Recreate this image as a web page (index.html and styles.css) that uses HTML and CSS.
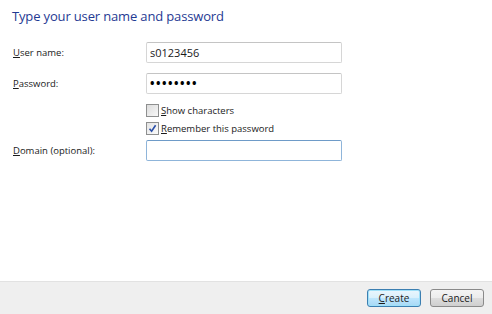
FILE: index.html
```html
<!DOCTYPE html>
<html lang="en">
<head>
    <meta charset="UTF-8">
    <meta name="viewport" content="width=device-width, initial-scale=1.0">
    <title>Type your user name and password</title>
    <link rel="stylesheet" href="styles.css">
</head>
<body>
    <div class="dialog">
        <div class="content">
            <h1>Type your user name and password</h1>

            <div class="form">
                <div class="row">
                    <label class="label" for="user"><u>U</u>ser name:</label>
                    <input class="field" id="user" type="text" value="s0123456">
                </div>
                <div class="row">
                    <label class="label" for="pass"><u>P</u>assword:</label>
                    <input class="field secret" id="pass" type="password" value="12345678">
                </div>
                <div class="check-row first">
                    <span class="checkbox"></span>
                    <span><u>S</u>how characters</span>
                </div>
                <div class="check-row">
                    <span class="checkbox checked">
                        <svg width="9" height="9" viewBox="0 0 9 9"><path d="M1.5 4.8 L3.6 7.2 L7.6 1.2" fill="none" stroke="#2a4fa8" stroke-width="1.6"/></svg>
                    </span>
                    <span><u>R</u>emember this password</span>
                </div>
                <div class="row domain">
                    <label class="label" for="domain"><u>D</u>omain (optional):</label>
                    <input class="field focused" id="domain" type="text" value="">
                </div>
            </div>
        </div>

        <div class="footer">
            <button class="btn default"><u>C</u>reate</button>
            <button class="btn">Cancel</button>
        </div>
    </div>
</body>
</html>
```

FILE: styles.css
```css
html, body {
    margin: 0;
    padding: 0;
}
body {
    font-family: "Open Sans", "Noto Sans", sans-serif;
    font-size: 9.5px;
    color: #1a1a1a;
    background: white;
}
.dialog {
    width: 492px;
    height: 314px;
    display: flex;
    flex-direction: column;
}
.content {
    flex: 1;
    padding: 6px 12px 0 13px;
}
h1 {
    margin: 0 0 0 -1px;
    font-size: 13px;
    font-weight: normal;
    letter-spacing: -0.15px;
    color: #1f3a93;
    line-height: 20px;
}
.form {
    margin-top: 16px;
}
.row {
    display: flex;
    align-items: center;
    height: 21px;
    margin-bottom: 10px;
}
.label {
    width: 133px;
}
.field {
    box-sizing: border-box;
    width: 196px;
    height: 21px;
    margin: 0;
    padding: 0 3px;
    border: 1px solid #d6d6d6;
    border-top-color: #c4c4c4;
    border-radius: 2px;
    font-family: inherit;
    font-size: 11px;
    color: #1a1a1a;
    background: white;
    outline: none;
}
.field.secret {
    font-size: 12px;
    letter-spacing: 1.5px;
    font-weight: bold;
    color: #000;
}
.field.focused {
    border-color: #8fb5da;
    border-top-color: #6e9bc8;
}
.check-row {
    display: flex;
    align-items: center;
    gap: 2px;
    height: 18px;
    margin-left: 133px;
}
.check-row.first {
    margin-top: -3px;
}
.checkbox {
    box-sizing: border-box;
    width: 13px;
    height: 13px;
    border: 1px solid #8e8f8f;
    background: linear-gradient(135deg, #dcdcdc, #f8f8f8);
    display: flex;
    align-items: center;
    justify-content: center;
}
.checkbox.checked {
    background: linear-gradient(135deg, #e4e4e4, #fbfbfb);
}
.row.domain {
    margin-top: 3px;
}
.footer {
    height: 32px;
    background: #efefef;
    border-top: 1px solid #e2e2e2;
    display: flex;
    align-items: center;
    justify-content: flex-end;
    gap: 9px;
    padding-right: 8px;
}
.btn {
    width: 54px;
    height: 18px;
    padding: 0;
    font-family: inherit;
    font-size: 10px;
    color: #1a1a1a;
    border: 1px solid #8a8a8a;
    border-radius: 3px;
    background: linear-gradient(#f4f4f4 0%, #ececec 50%, #dddddd 51%, #cfcfcf 100%);
}
.btn.default {
    border-color: #3c7fb1;
    box-shadow: inset 0 0 0 1px #9fe0f8;
    background: linear-gradient(#eaf6fd 0%, #d9f0fc 50%, #bee6fd 51%, #a7d9f5 100%);
}
```
